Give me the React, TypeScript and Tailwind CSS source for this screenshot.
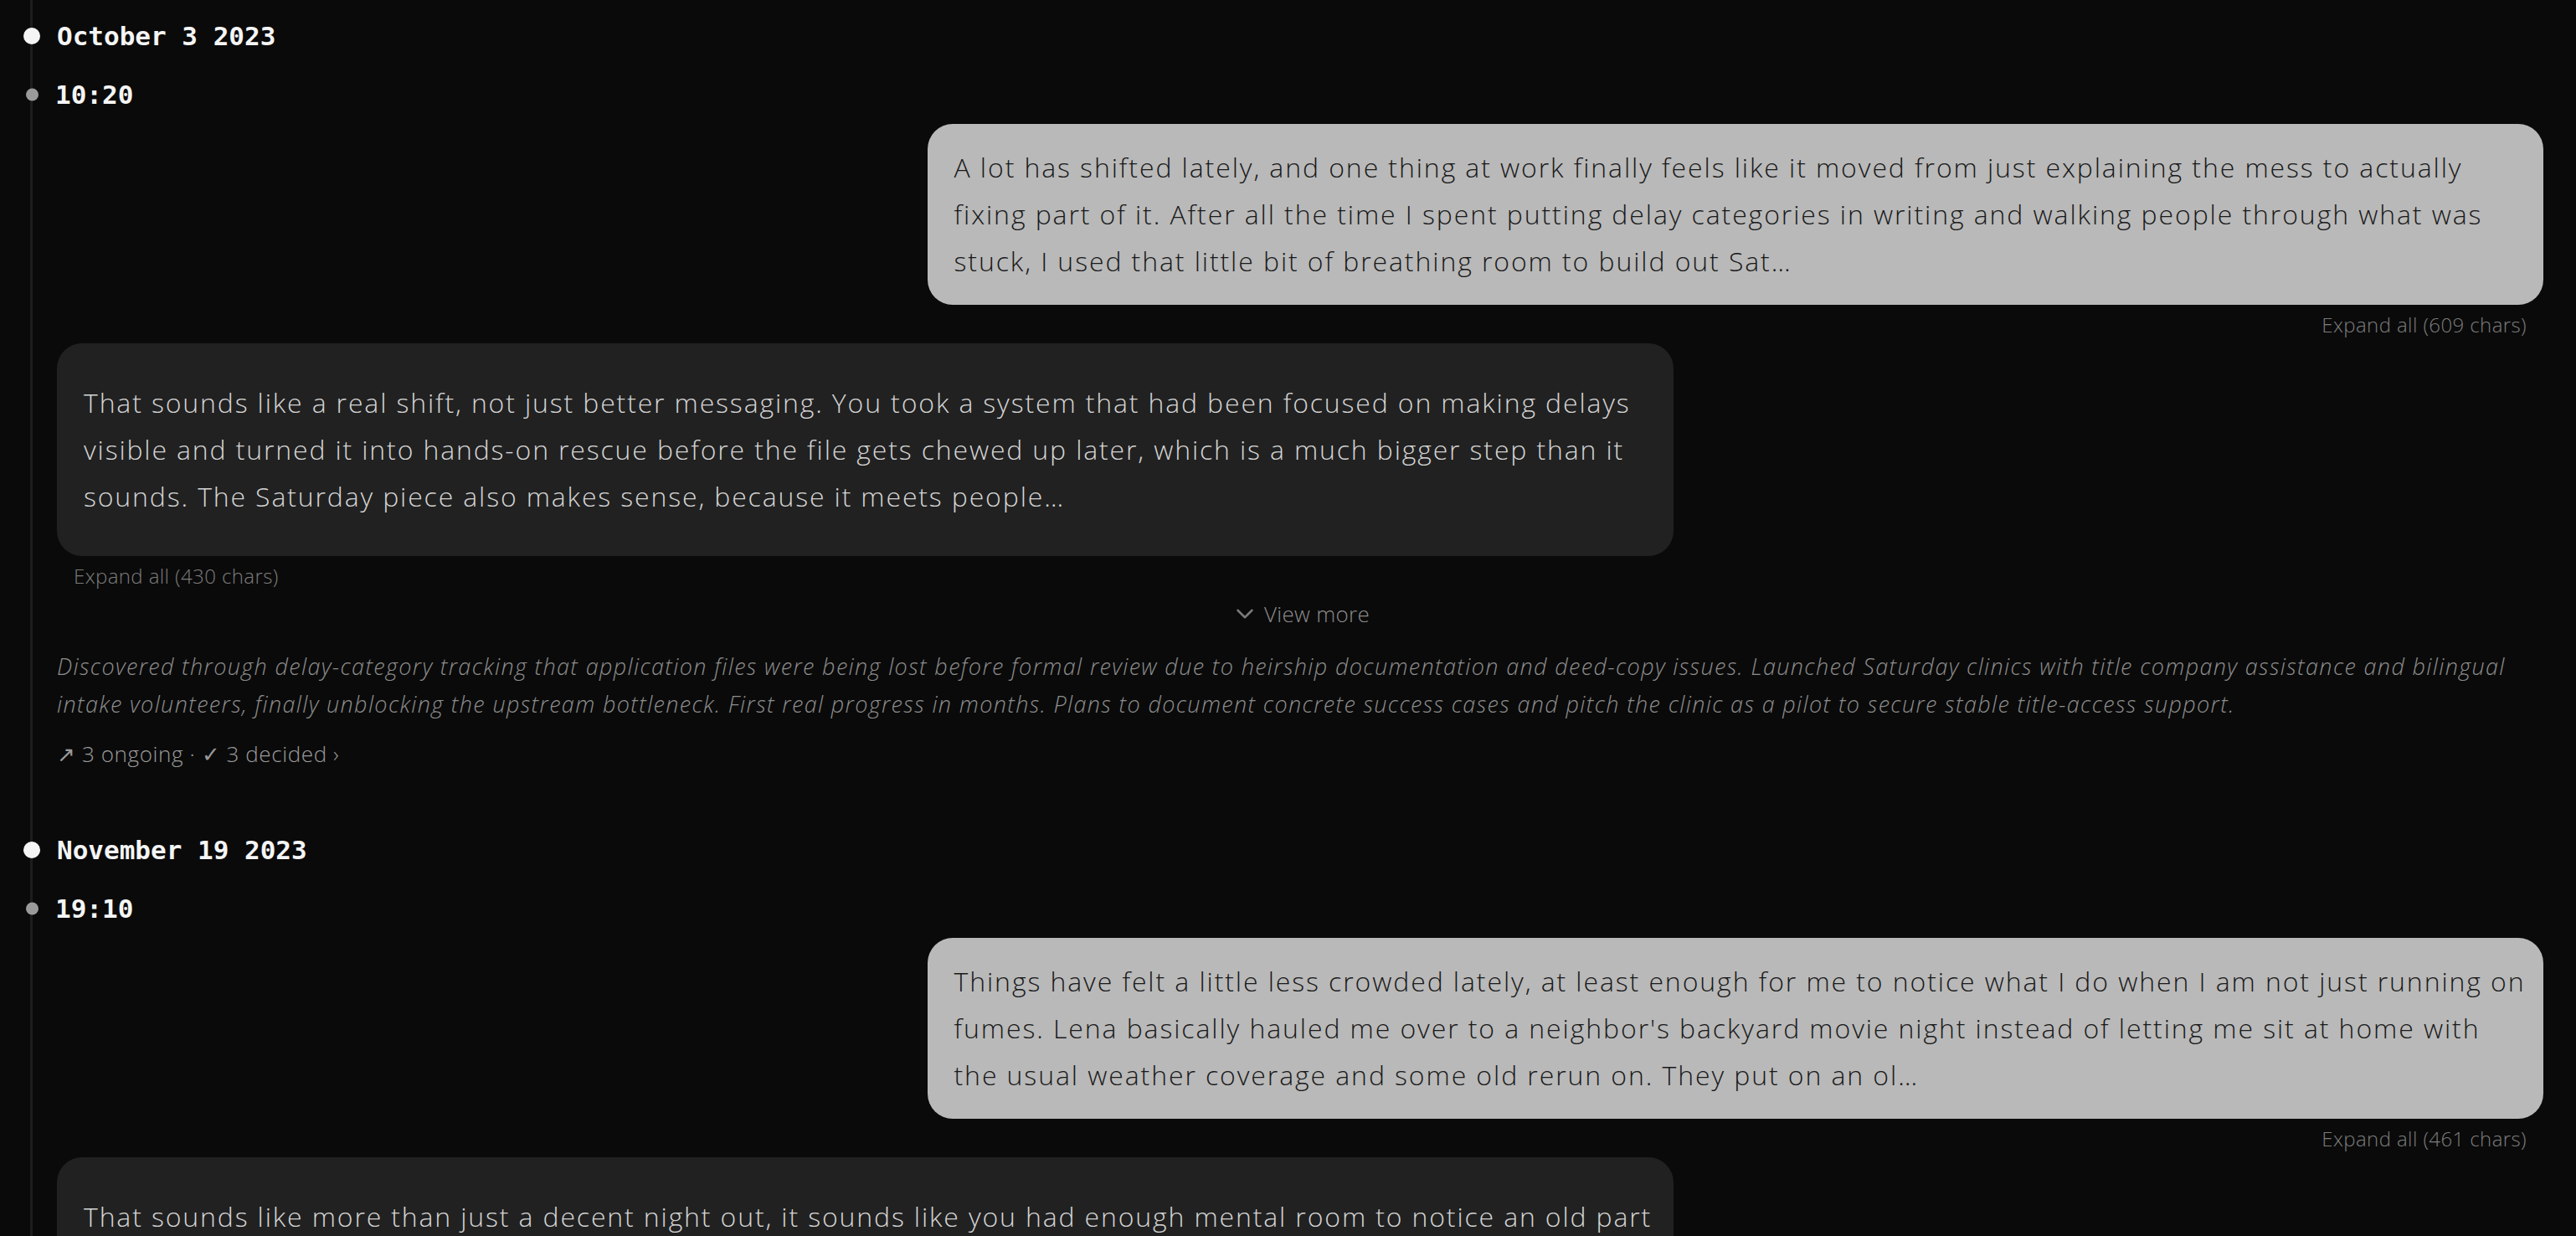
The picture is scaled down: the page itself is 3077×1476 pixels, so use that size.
import { ChevronDown } from "lucide-react";

type Entry = {
  date: string;
  time: string;
  user: string[];
  userChars: number;
  assistant: string[];
  assistantChars: number;
  summary: string[];
  meta: string;
};

const entries: Entry[] = [
  {
    date: "October 3 2023",
    time: "10:20",
    user: [
      "A lot has shifted lately, and one thing at work finally feels like it moved from just explaining the mess to actually",
      "fixing part of it. After all the time I spent putting delay categories in writing and walking people through what was",
      "stuck, I used that little bit of breathing room to build out Sat…",
    ],
    userChars: 609,
    assistant: [
      "That sounds like a real shift, not just better messaging. You took a system that had been focused on making delays",
      "visible and turned it into hands-on rescue before the file gets chewed up later, which is a much bigger step than it",
      "sounds. The Saturday piece also makes sense, because it meets people…",
    ],
    assistantChars: 430,
    summary: [
      "Discovered through delay-category tracking that application files were being lost before formal review due to heirship documentation and deed-copy issues. Launched Saturday clinics with title company assistance and bilingual",
      "intake volunteers, finally unblocking the upstream bottleneck. First real progress in months. Plans to document concrete success cases and pitch the clinic as a pilot to secure stable title-access support.",
    ],
    meta: "↗ 3 ongoing · ✓ 3 decided ›",
  },
  {
    date: "November 19 2023",
    time: "19:10",
    user: [
      "Things have felt a little less crowded lately, at least enough for me to notice what I do when I am not just running on",
      "fumes. Lena basically hauled me over to a neighbor's backyard movie night instead of letting me sit at home with",
      "the usual weather coverage and some old rerun on. They put on an ol…",
    ],
    userChars: 461,
    assistant: [
      "That sounds like more than just a decent night out, it sounds like you had enough mental room to notice an old part",
      "of yourself showing up again. Letting Lena pull you somewhere new instead of defaulting to the couch is a small",
      "choice, but it says a lot about where you are right now and what you are making room for…",
    ],
    assistantChars: 412,
    summary: [
      "Attended a neighbor's backyard movie night with Lena instead of staying home. Noticed a return of curiosity and ease when not running on fumes.",
    ],
    meta: "↗ 2 ongoing · ✓ 1 decided ›",
  },
];

function Lines({ lines }: { lines: string[] }) {
  return (
    <>
      {lines.map((l, i) => (
        <span key={i} className="block whitespace-nowrap">
          {l}
        </span>
      ))}
    </>
  );
}

function Section({ e }: { e: Entry }) {
  return (
    <div className="pt-[23px] pb-[56px]">
      <div className="relative flex h-[40px] items-center font-['DejaVu_Sans_Mono',monospace] text-[31px] font-bold text-[#f5f5f5]">
        <span className="absolute left-[-40px] top-1/2 h-[20px] w-[20px] -translate-y-1/2 rounded-full bg-[#f5f5f5]" />
        {e.date}
      </div>
      <div className="relative mt-[30px] flex h-[40px] items-center font-['DejaVu_Sans_Mono',monospace] text-[31px] font-bold text-[#f5f5f5]">
        <span className="absolute left-[-37px] top-1/2 h-[15px] w-[15px] -translate-y-1/2 rounded-full bg-[#9a9a9a]" />
        <span className="ml-[-2px]">{e.time}</span>
      </div>

      <div className="mt-[15px] flex justify-end">
        <div className="w-[65%] rounded-[30px] bg-[#b9b9b9] px-8 py-6 text-[32px] font-[350] leading-[56px] tracking-[1.9px] text-[#1a1a1a]">
          <Lines lines={e.user} />
        </div>
      </div>
      <div className="mt-[10px] pr-[20px] text-right text-[24px] leading-[28px] tracking-[0.4px] text-[#7c7c7c]">
        Expand all ({e.userChars} chars)
      </div>

      <div className="mt-[8px] flex justify-start">
        <div className="w-[65%] rounded-[30px] bg-[#212121] px-8 py-[43px] text-[32px] font-[350] leading-[56px] tracking-[1.85px] text-[#d4d4d4]">
          <Lines lines={e.assistant} />
        </div>
      </div>
      <div className="mt-[10px] pl-[20px] text-[24px] leading-[28px] tracking-[0.4px] text-[#7c7c7c]">
        Expand all ({e.assistantChars} chars)
      </div>

      <div className="mt-[15px] flex h-[32px] items-center justify-center gap-[6px] text-[26px] tracking-[0.3px] text-[#8a8a8a]">
        <ChevronDown size={34} strokeWidth={1.75} className="text-[#7a7a7a]" />
        <span>View more</span>
      </div>

      <p className="mt-[24px] text-[27px] italic leading-[45px] tracking-[1.35px] text-[#8d8d8d]">
        <Lines lines={e.summary} />
      </p>
      <div className="mt-[21px] text-[26px] leading-[32px] tracking-[0.6px] text-[#9a9a9a]">{e.meta}</div>
    </div>
  );
}

export default function App() {
  return (
    <div className="min-h-screen bg-[#0a0a0a] font-['Open_Sans',sans-serif] font-light">
      <div className="ml-[36px] min-h-screen border-l-[3px] border-[#1d1d1d] pl-[29px] pr-[39px]">
        {entries.map((e) => (
          <Section key={e.date} e={e} />
        ))}
      </div>
    </div>
  );
}
